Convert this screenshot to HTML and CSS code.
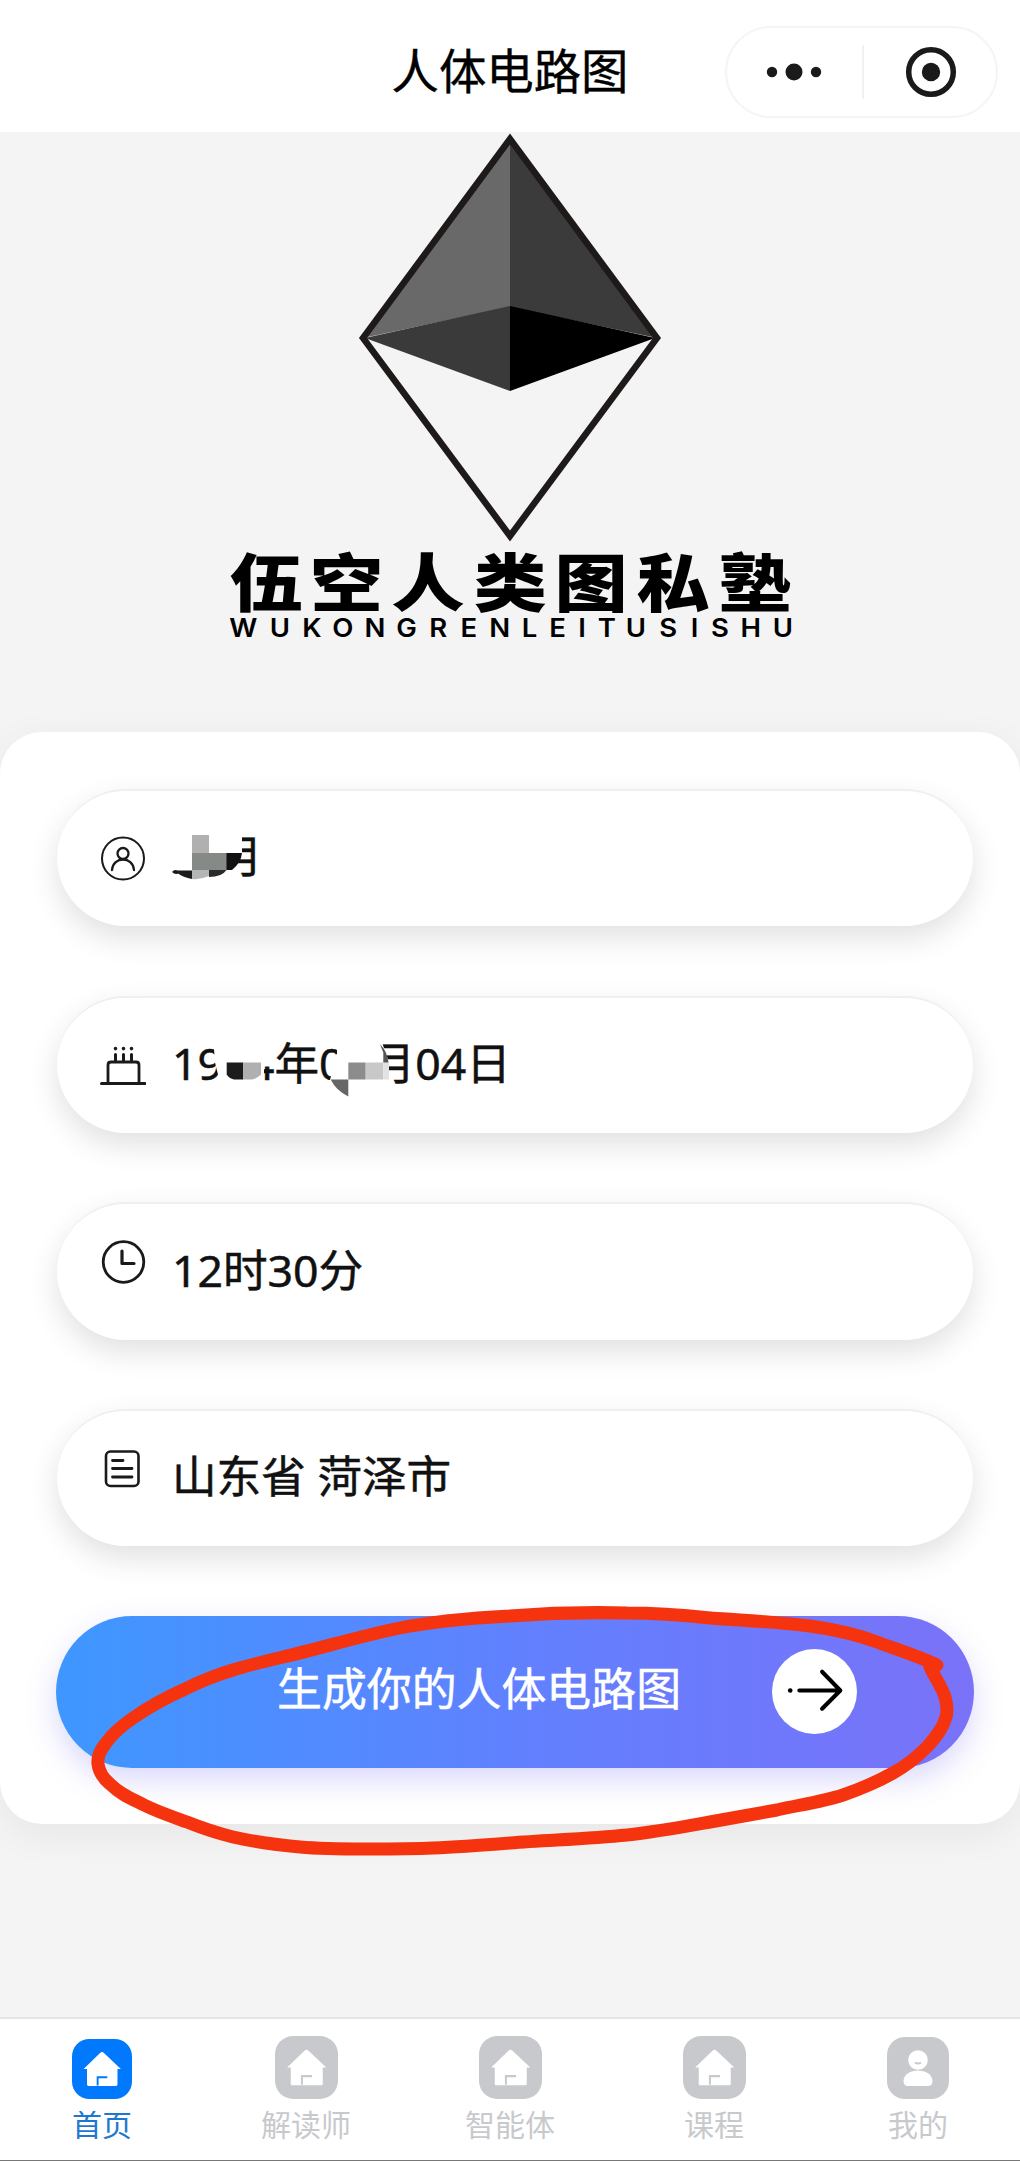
FILE: index.html
```html
<!DOCTYPE html>
<html lang="zh-CN">
<head>
  <meta charset="UTF-8">
  <title>人体电路图</title>
  <meta name="viewport" content="width=device-width, initial-scale=1.0" />
  <link rel="stylesheet" href="styles.css">
</head>
<body>

  <svg class="defs" width="0" height="0">
    <symbol id="icon-home" viewBox="0 0 62 62">
      <rect width="62" height="62" rx="18" fill="currentColor"/>
      <path d="M31 13.5 Q32 13.5 33 14.5 L50.5 31 H47 V47 Q47 48.500 45.500 48.500 H17 Q15.500 48.500 15.500 47 V31 H12 L29 14.500 Q30 13.500 31 13.500 Z" fill="#fff"/>
      <path d="M26.500 48 V39.500 H36.500" fill="none" stroke="currentColor" stroke-width="2"/>
    </symbol>
    <symbol id="icon-me" viewBox="0 0 62 62">
      <rect width="62" height="62" rx="18" fill="currentColor"/>
      <circle cx="31" cy="23" r="9.800" fill="#fff"/>
      <path d="M28 25.500 Q31 27.500 34 25.500" fill="none" stroke="currentColor" stroke-width="2"/>
      <path d="M16.500 44 C17 30 45 30 45.500 44 Q45.500 49 41 49 H21 Q16.500 49 16.500 44 Z" fill="#fff"/>
    </symbol>
  </svg>

  <header class="navbar">
    <h1>人体电路图</h1>
    <div class="capsule">
      <div class="capsule-btn">
        <svg width="56" height="20" viewBox="0 0 56 20">
          <circle cx="6" cy="10" r="5.200"/>
          <circle cx="28" cy="10" r="8.500"/>
          <circle cx="50" cy="10" r="5.200"/>
        </svg>
      </div>
      <div class="capsule-btn">
        <svg width="52" height="52" viewBox="0 0 52 52">
          <circle cx="26" cy="26" r="22.300" fill="none" stroke="#1a1a1a" stroke-width="5.500"/>
          <circle cx="26" cy="26" r="9.200"/>
        </svg>
      </div>
    </div>
  </header>

  <main>
    <svg class="logo" width="580" height="520" viewBox="220 132 580 520">
      <polygon points="510,139 363,338 510,307" fill="#696969"/>
      <polygon points="510,139 657,338 510,307" fill="#3b3b3b"/>
      <polygon points="365,338 510,306 510,391" fill="#3a3a3a"/>
      <polygon points="655,338 510,306 510,391" fill="#000"/>
      <polygon points="510,139 363,338 510,536 657,338" fill="none" stroke="#1e1a19" stroke-width="6.500"/>
      <text class="logo-cn" transform="scale(1.16 1)" y="606" x="229.300 298.800 369.100 440 509.600 580.200 650.800">伍空人类图私塾</text>
      <text class="logo-en" transform="scale(1.1 1)" y="637" x="221.200 254.500 283.500 311.600 340.800 369.700 398.300 426.100 454.300 481.500 506.800 529.100 551.700 578.100 607.400 631.400 654.400 682.500 711.700">WUKONGRENLEITUSISHU</text>
    </svg>

    <section class="card">
      <div class="field">
        <svg class="icon" width="46" height="46" viewBox="0 0 46 46">
          <circle cx="23" cy="22.500" r="21" stroke-width="2"/>
          <circle cx="23" cy="17.500" r="5.500" stroke-width="2.300"/>
          <path d="M12 34 C13 20 33 20 34 34" stroke-width="2.300"/>
        </svg>
        <span class="value"><i class="hidden-char"></i>月</span>
        <svg class="mosaic" viewBox="57 789 916 138">
          <path d="M205 830 H242 V854 H205 Z M205 853 H231 L231 882 H205 Z" fill="#fff"/>
          <path d="M226 853 H242 Q241 863 232 870 H226 Z" fill="#111"/>
          <path d="M172 872 Q174 869 178 870.500 H192 V879 Q183 877 178 873.500 Q175 875 172 872 Z" fill="#1c1c1c"/>
          <path d="M192 835 H209 V853 H192 Z" fill="#b0b0b0"/>
          <path d="M192 853 H226.500 V870 H192 Z" fill="#868a86"/>
          <path d="M192 870 H209 V876 Q200 880 192 879 Z" fill="#b4b6b5"/>
          <path d="M209 870 H226.500 Q222 877 209 877 Z" fill="#2b2b2b"/>
        </svg>
      </div>

      <div class="field">
        <svg class="icon" width="46" height="46" viewBox="0 0 46 46">
          <path d="M1.500 41.500 H45" stroke-width="3"/>
          <path d="M8 41 V23 Q8 20 11 20 H36 Q39 20 39 23 V41" stroke-width="2.800"/>
          <path d="M15.500 19 V12.500 M23.500 19 V12.500 M31.500 19 V12.500" stroke-width="3"/>
          <path d="M15.500 6.500 V6.600 M23.500 6.500 V6.600 M31.500 6.500 V6.600" stroke-width="3.600"/>
        </svg>
        <span class="value">19<i class="hidden-digit"></i>4年0<i class="hidden-digit"></i>月04日</span>
        <svg class="mosaic" viewBox="57 995.500 916 138">
          <path d="M213 1036 H272 V1066 H264 V1090 H222 L215 1062 Z" fill="#fff"/>
          <path d="M226.700 1062 H243.300 V1079 H234 Q229 1078 226.700 1074 Z" fill="#1c1c1c"/>
          <path d="M243.300 1062 H261 V1074 Q257 1078 252 1079 H243.300 Z" fill="#b0b0b0"/>
          <path d="M337 1036 H380 L389 1062 V1079 L393 1088 H334 L330 1079 Q334 1070 331 1062 L337 1053 Z" fill="#fff"/>
          <path d="M330.700 1079 H348.300 V1096 Q336 1090 330.700 1079 Z" fill="#666"/>
          <path d="M348.300 1062 H365.700 V1079 H348.300 Z" fill="#8c8c8c"/>
          <path d="M365.700 1062 H383.300 V1079 H365.700 Z" fill="#c8c8c8"/>
          <path d="M383.300 1062 H389 V1079 H383.300 Z" fill="#e2e2e2"/>
          <path d="M380 1044 Q387 1050 388.500 1062 H383.300 V1052 Z" fill="#555"/>
        </svg>
      </div>

      <div class="field">
        <svg class="icon raised" width="46" height="46" viewBox="0 0 46 46">
          <circle cx="23.500" cy="23" r="20.300" stroke-width="2.800"/>
          <path d="M22 12 V24.500 H34" stroke-width="3.200"/>
        </svg>
        <span class="value">12时30分</span>
      </div>

      <div class="field">
        <svg class="icon raised" width="46" height="46" viewBox="0 0 46 46">
          <rect x="6" y="5.500" width="32.500" height="34.500" rx="4.500" stroke-width="2.600"/>
          <path d="M12.500 14.500 H23 M12.500 22.500 H32 M12.500 31 H32" stroke-width="2.800"/>
        </svg>
        <span class="value">山东省 菏泽市</span>
      </div>

      <button class="submit">
        <span>生成你的人体电路图</span>
        <svg width="85" height="85" viewBox="0 0 84 84">
          <circle cx="42" cy="42" r="42" fill="#fff"/>
          <circle cx="18" cy="41" r="2.300"/>
          <path d="M27 41 H67 M49.500 22.500 L67.500 41 L49.500 59" fill="none" stroke="#000" stroke-width="4" stroke-linecap="round" stroke-linejoin="round"/>
        </svg>
      </button>

      <!-- hand drawn circle around the button -->
      <svg class="marker" viewBox="0 1590 1020 280">
        <path d="M937 1665 C918 1656 898 1650 877 1642 C855 1634 833 1629 810 1626 C777 1622 743 1620 710 1618 C682 1615 655 1613 627 1613 C588 1612 549 1613 510 1616 C472 1618 435 1621 400 1628 C360 1636 322 1648 283 1657 C266 1661 249 1665 233 1670 C216 1675 199 1682 183 1690 C165 1698 149 1707 133 1718 C123 1725 112 1734 106 1743 C101 1749 97 1756 98 1764 C99 1772 104 1779 110 1784 C120 1794 132 1799 144 1805 C158 1812 173 1817 187 1822 C202 1828 217 1833 233 1837 C255 1842 278 1845 300 1847 C322 1849 345 1849 367 1849 C389 1849 411 1849 433 1848 C459 1847 485 1845 510 1843 C549 1840 588 1839 627 1835 C655 1832 682 1827 710 1822 C732 1818 755 1814 777 1810 C799 1805 822 1802 843 1795 C860 1789 877 1782 893 1773 C906 1766 917 1757 927 1747 C934 1739 942 1730 945 1720 C948 1713 947 1704 945 1697 C942 1687 935 1678 930 1667"/>
      </svg>
    </section>
  </main>

  <nav class="tabbar">
    <a class="active"><svg width="60" height="60"><use href="#icon-home"/></svg><span>首页</span></a>
    <a><svg width="63" height="63"><use href="#icon-home"/></svg><span>解读师</span></a>
    <a><svg width="63" height="63"><use href="#icon-home"/></svg><span>智能体</span></a>
    <a><svg width="63" height="63"><use href="#icon-home"/></svg><span>课程</span></a>
    <a><svg width="62" height="62"><use href="#icon-me"/></svg><span>我的</span></a>
  </nav>

</body>
</html>
```
FILE: styles.css
```css
* {
  margin: 0;
  padding: 0;
  box-sizing: border-box;
}

body {
  height: 2161px;
  display: flex;
  flex-direction: column;
  font-family: "Noto Sans", "Noto Sans CJK SC", sans-serif;
  background: #f4f4f4;
  color: #111;
  overflow: hidden;
}

.defs {
  position: absolute;
}

.navbar {
  height: 132px;
  flex: none;
  display: grid;
  grid-template-columns: 1fr auto 1fr;
  align-items: center;
  padding: 12px 22px 0 0;
  background: #fff;
}

.navbar h1 {
  grid-column: 2;
  font-size: 47.4px;
  font-weight: 400;
  -webkit-text-stroke: 0.4px #000;
  line-height: 56px;
  padding-left: 22px;
  margin-top: -2px;
  color: #000;
}

.capsule {
  justify-self: end;
  display: flex;
  align-items: center;
  width: 273px;
  height: 92px;
  border: 2px solid #f5f5f5;
  border-radius: 46px;
  fill: #1a1a1a;
}

.capsule-btn {
  width: 50%;
  height: 54px;
  display: flex;
  align-items: center;
  justify-content: center;
}

.capsule-btn + .capsule-btn {
  border-left: 2px solid #f2f2f2;
  padding-left: 2px;
}

main {
  flex: 1;
}

.logo {
  display: block;
  margin: 0 auto 80px;
}

.logo text {
  text-anchor: middle;
  fill: #000;
}

.logo-cn {
  font-family: "Noto Sans CJK SC", sans-serif;
  font-size: 63px;
  font-weight: 900;
}

.logo-en {
  font-family: Inter, sans-serif;
  font-size: 25px;
  font-weight: 600;
}

.card {
  position: relative;
  display: flex;
  flex-direction: column;
  gap: 69.3px;
  padding: 57px 46px 56px 56px;
  background: #fff;
  border-radius: 42px;
  box-shadow: 0 10px 40px rgba(0, 0, 0, 0.06);
}

.field {
  position: relative;
  display: flex;
  align-items: center;
  height: 137.4px;
  margin: 0 1px;
  padding-left: 43px;
  gap: 26px;
  border-top: 2px solid #efefef;
  border-radius: 69px;
  background: #fff;
  box-shadow: 0 12px 30px rgba(0, 0, 0, 0.12);
}

.icon {
  flex: none;
  fill: none;
  stroke: #1a1a1a;
  stroke-linecap: round;
  stroke-linejoin: round;
}

.raised {
  margin-bottom: 20px;
}

.value {
  font-size: 44.6px;
  -webkit-text-stroke: 0.5px #111;
  line-height: 60px;
  margin-top: -5px;
  white-space: nowrap;
}

.hidden-char {
  display: inline-block;
  width: 46px;
}

.hidden-digit {
  display: inline-block;
  width: 26px;
}

.mosaic {
  position: absolute;
  left: 0;
  top: -2px;
  width: 916px;
  height: 138px;
}

.submit {
  display: flex;
  align-items: center;
  height: 152px;
  padding-left: 221px;
  gap: 91px;
  border: none;
  border-radius: 76px;
  background: linear-gradient(90deg, #4096ff 3%, #6280ff 52%, #7a72f8);
  box-shadow: 0 12px 30px rgba(108, 99, 240, 0.25);
  color: #fff;
  font-family: inherit;
  font-size: 44.9px;
  -webkit-text-stroke: 0.5px #fff;
  line-height: 60px;
  white-space: nowrap;
}

.submit span {
  margin-top: -5px;
}

.marker {
  position: absolute;
  left: 0;
  bottom: -46px;
  width: 1020px;
  height: 280px;
  fill: none;
  stroke: #f5340f;
  stroke-width: 13;
  stroke-linecap: round;
  stroke-linejoin: round;
}

.tabbar {
  height: 144px;
  flex: none;
  display: grid;
  grid-template-columns: repeat(5, 1fr);
  background: #fff;
  border-top: 2px solid #e6e6e6;
  border-bottom: 1px solid #777;
}

.tabbar a {
  display: flex;
  flex-direction: column;
  align-items: center;
  justify-content: flex-end;
  padding-bottom: 15px;
  gap: 6px;
  color: #c8c9cc;
  font-size: 30px;
  line-height: 40px;
}

.tabbar .active {
  color: #0079fe;
}

.tabbar .active span {
  color: #1f78cf;
}
```
